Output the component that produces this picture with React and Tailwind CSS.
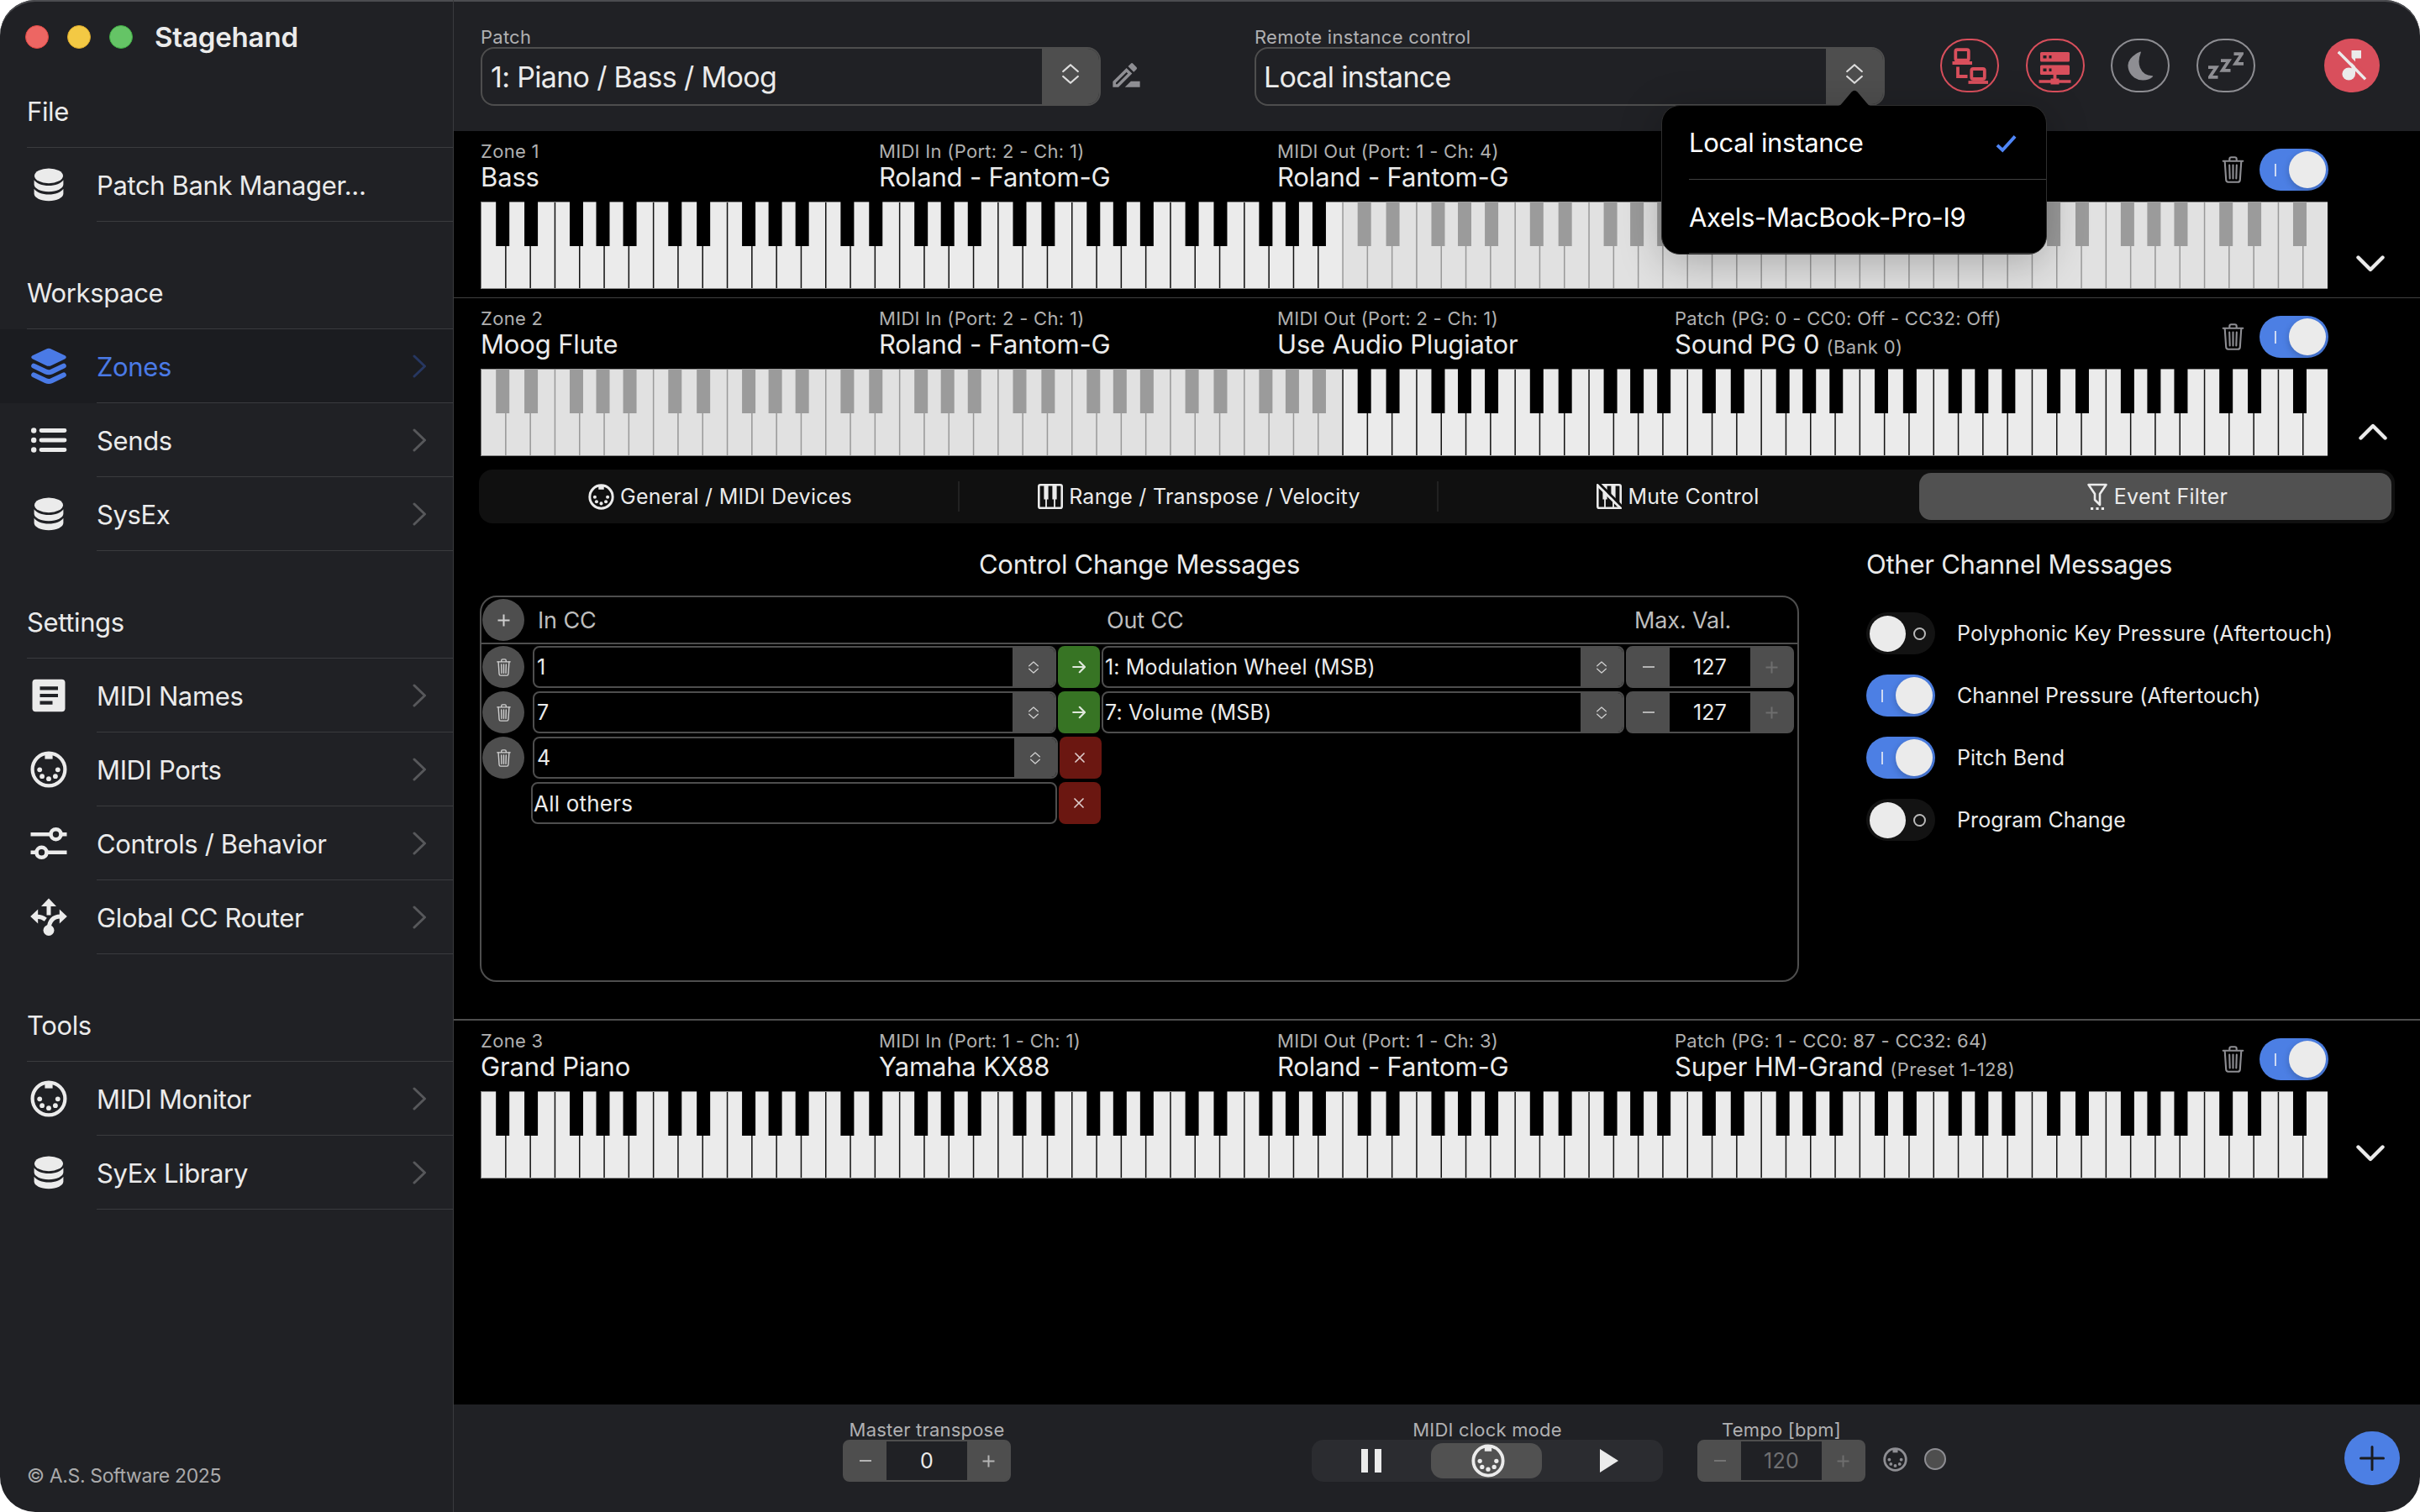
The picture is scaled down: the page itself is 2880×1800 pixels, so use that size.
import React, { useState } from "react";

const sections = [
  { title: "File", items: [{ icon: "database", label: "Patch Bank Manager...", plain: true }] },
  {
    title: "Workspace",
    items: [
      { icon: "layers", label: "Zones" },
      { icon: "list", label: "Sends" },
      { icon: "database", label: "SysEx" },
    ],
  },
  {
    title: "Settings",
    items: [
      { icon: "names", label: "MIDI Names" },
      { icon: "midi", label: "MIDI Ports" },
      { icon: "sliders", label: "Controls / Behavior" },
      { icon: "router", label: "Global CC Router" },
    ],
  },
  {
    title: "Tools",
    items: [
      { icon: "midi", label: "MIDI Monitor" },
      { icon: "database", label: "SyEx Library" },
    ],
  },
];

const zones = [
  {
    id: 1,
    name: "Bass",
    range: [0, 35],
    info: [
      { label: "MIDI In (Port: 2 - Ch: 1)", value: "Roland - Fantom-G" },
      { label: "MIDI Out (Port: 1 - Ch: 4)", value: "Roland - Fantom-G" },
    ],
  },
  {
    id: 2,
    name: "Moog Flute",
    range: [35, 75],
    info: [
      { label: "MIDI In (Port: 2 - Ch: 1)", value: "Roland - Fantom-G" },
      { label: "MIDI Out (Port: 2 - Ch: 1)", value: "Use Audio Plugiator" },
      { label: "Patch (PG: 0 - CC0: Off - CC32: Off)", value: "Sound PG 0", note: "(Bank 0)" },
    ],
  },
  {
    id: 3,
    name: "Grand Piano",
    range: [0, 75],
    info: [
      { label: "MIDI In (Port: 1 - Ch: 1)", value: "Yamaha KX88" },
      { label: "MIDI Out (Port: 1 - Ch: 3)", value: "Roland - Fantom-G" },
      { label: "Patch (PG: 1 - CC0: 87 - CC32: 64)", value: "Super HM-Grand", note: "(Preset 1-128)" },
    ],
  },
];

function MidiIcon({ className }) {
  return (
    <svg className={className} viewBox="0 0 44 44" fill="currentColor">
      <circle cx="22" cy="22" r="19.4" fill="none" stroke="currentColor" strokeWidth="4.2" />
      <rect x="17.4" y="3" width="9.2" height="6.6" />
      <circle cx="11.2" cy="22.3" r="2.9" />
      <circle cx="14.1" cy="30.2" r="2.9" />
      <circle cx="22" cy="33.2" r="2.9" />
      <circle cx="29.9" cy="30.2" r="2.9" />
      <circle cx="32.8" cy="22.3" r="2.9" />
    </svg>
  );
}

function DatabaseIcon() {
  return (
    <svg className="h-11 w-11" viewBox="0 0 44 44" fill="currentColor">
      <ellipse cx="22" cy="11.3" rx="17" ry="8.9" />
      <path d="M4.6 16.2C7.4 20.4 14 23 22 23s14.6-2.6 17.4-6.8v5.3C39.4 26.3 31.6 30.2 22 30.2S4.6 26.3 4.6 21.5z" />
      <path d="M4.6 26.7C7.4 30.9 14 33.5 22 33.5s14.6-2.6 17.4-6.8v5.8C39.4 37.3 31.6 41.2 22 41.2S4.6 37.3 4.6 32.5z" />
    </svg>
  );
}

function LayersIcon() {
  return (
    <svg className="h-11 w-11" viewBox="0 0 44 44" fill="currentColor">
      <path d="M18.6 1.7Q22 0 25.4 1.7L41.4 9.300Q44.200 11.300 41.400 13.300L25.400 20.900Q22 22.600 18.600 20.900L2.600 13.300Q-.2 11.300 2.600 9.300z" />
      <path d="M4.200 21.600L18.600 28.500Q22 30.100 25.400 28.500L39.800 21.600" fill="none" stroke="currentColor" strokeWidth="6" strokeLinecap="round" />
      <path d="M4.200 32.400L18.600 39.300Q22 40.900 25.400 39.300L39.800 32.400" fill="none" stroke="currentColor" strokeWidth="6" strokeLinecap="round" />
    </svg>
  );
}

function ListIcon() {
  return (
    <svg className="h-11 w-11" viewBox="0 0 44 44" fill="currentColor">
      <circle cx="4.2" cy="10.5" r="3.2" />
      <circle cx="4.2" cy="22" r="3.2" />
      <circle cx="4.2" cy="33.5" r="3.2" />
      <path d="M13 10.5H41M13 22H41M13 33.5H41" stroke="currentColor" strokeWidth="4.8" strokeLinecap="round" />
    </svg>
  );
}

function NamesIcon() {
  return (
    <svg className="h-11 w-11" viewBox="0 0 44 44" fill="currentColor">
      <rect x="2.5" y="2.7" width="39" height="38.6" rx="4" />
      <path d="M11.5 13.3H33M11.5 22H33M11.5 30.7H26.5" stroke="#202125" strokeWidth="4.2" />
    </svg>
  );
}

function SlidersIcon() {
  return (
    <svg className="h-11 w-11" viewBox="0 0 44 44" fill="none" stroke="currentColor" strokeWidth="4.6">
      <path d="M.5 11.2H24M36 11.2H43.5M.5 32.8H8M20 32.8H43.5" />
      <circle cx="30.5" cy="11.2" r="6" />
      <circle cx="13.5" cy="32.8" r="6" />
    </svg>
  );
}

function RouterIcon() {
  return (
    <svg className="h-[46px] w-[46px]" viewBox="0 0 46 46" fill="currentColor">
      <circle cx="23" cy="38.5" r="6.5" />
      <path d="M23 .5L32 10H14z" />
      <path d="M1.2 22L10.2 13.5V30.5z" />
      <path d="M44.8 22L35.8 13.5V30.5z" />
      <path d="M23 9V20.5" stroke="currentColor" strokeWidth="5" />
      <path d="M9 22.3Q15 22.5 19.3 25.8" fill="none" stroke="currentColor" strokeWidth="5" />
      <path d="M23 37Q24 22.3 37 22.1" fill="none" stroke="currentColor" strokeWidth="5" />
    </svg>
  );
}

function NavIcon({ name }) {
  if (name === "database") return <DatabaseIcon />;
  if (name === "layers") return <LayersIcon />;
  if (name === "list") return <ListIcon />;
  if (name === "names") return <NamesIcon />;
  if (name === "sliders") return <SlidersIcon />;
  if (name === "router") return <RouterIcon />;
  return <MidiIcon className="h-11 w-11" />;
}

function TrashIcon({ className }) {
  return (
    <svg className={className} viewBox="0 0 26 32" fill="none" stroke="currentColor" strokeWidth="2.1" strokeLinecap="round" strokeLinejoin="round">
      <path d="M1.2 5.8H24.8M8.8 5.5V3.4Q8.8 1.3 10.9 1.3H15.1Q17.2 1.3 17.2 3.4V5.5" />
      <path d="M3.2 6L4.7 28.3Q4.9 30.7 7.3 30.7H18.7Q21.1 30.7 21.3 28.3L22.8 6" />
      <path d="M8.7 10.5L9.2 26.5M13 10.5V26.5M17.3 10.5L16.8 26.5" />
    </svg>
  );
}

function PianoIcon({ muted }) {
  return (
    <svg className="h-[30px] w-[30px]" viewBox="0 0 30 30" fill="none" stroke="currentColor">
      <rect x="1.3" y="1.3" width="27.4" height="27.4" rx="1.8" strokeWidth="2.6" />
      <path d="M10 2V18.5M20 2V18.5" strokeWidth="5.2" />
      <path d="M10 17V28M20 17V28" strokeWidth="1.8" />
      {muted && <path d="M2.5 -1L31 27.5" stroke="#101010" strokeWidth="3" />}
      {muted && <path d="M0 .5L29.5 30" strokeWidth="2.8" />}
    </svg>
  );
}

function FunnelIcon() {
  return (
    <svg className="h-8 w-[26px]" viewBox="0 0 26 32" fill="none" stroke="currentColor" strokeWidth="2.6" strokeLinejoin="round">
      <path d="M2.500 2H23.500L16 13V26L10 20V13z" />
      <path d="M5 30.5H8.2M11.4 30.5H14.6M17.8 30.5H21" strokeWidth="2.8" />
    </svg>
  );
}

function UpDown({ className }) {
  return (
    <svg className={className} viewBox="0 0 20 24" fill="none" stroke="currentColor" strokeWidth="2.2" strokeLinecap="round" strokeLinejoin="round">
      <path d="M1.2 9L10 1.2L18.8 9M1.2 15L10 22.8L18.8 15" />
    </svg>
  );
}

function Toggle({ on }) {
  return (
    <div className={on ? "flex h-[50px] w-[82px] items-center rounded-full bg-[#4c7fe4]" : "flex h-[50px] w-[82px] items-center rounded-full bg-[#131313]"}>
      {on ? (
        <>
          <span className="ml-[18px] h-[15px] w-0.5 bg-[#ced9f2]" />
          <span className="ml-[15px] h-11 w-11 rounded-full bg-[#ebebeb] shadow-[0_3px_8px_rgba(0,0,0,0.2)]" />
        </>
      ) : (
        <>
          <span className="ml-1 h-[43px] w-[43px] rounded-full bg-[#ebebeb]" />
          <span className="ml-[9px] h-[15px] w-[15px] rounded-full border-2 border-[#b9b9b9]" />
        </>
      )}
    </div>
  );
}

// 75 white keys: the complete MIDI note range C-1 to G9
const KEY = 29.3;
const BLACK = [0.894, 2.05, 3.89, 4.966, 6.06];

function Keyboard({ range }) {
  const inside = (i) => i >= range[0] && i < range[1];
  const whites = [...Array(75).keys()];
  const blacks = [];
  for (let o = 0; o < 11; o++) {
    BLACK.forEach((b) => {
      if (o * 7 + b < 74.5) blacks.push(o * 7 + b);
    });
  }
  return (
    <svg className="h-[104px] w-[2198px]" viewBox="0 0 2198 104">
      {whites.map((i) => (
        <rect key={i} x={i * KEY + 0.5} y="0.5" width={KEY} height="103" fill={inside(i) ? "#ebebeb" : "#e1e1e1"} />
      ))}
      {whites.slice(1).map((i) => (
        <rect key={i} x={i * KEY - 0.2} y="0" width="1.5" height="104" fill={inside(i) ? "#111111" : "#999999"} />
      ))}
      <path d="M0 .5H2198M0 103.5H2198" stroke="#8a8a8a" />
      {blacks.map((b) => (
        <rect key={b} x={b * KEY - 8} y="0" width="16" height="53" fill={inside(Math.floor(b)) ? "#000000" : "#9b9b9b"} />
      ))}
    </svg>
  );
}

function ZoneRow({ zone, open, onToggle }) {
  return (
    <div className="flex h-[188px] pl-8">
      <div className="w-[2199px]">
        <div className="flex h-[84px] items-start">
          <div className="grid w-[2072px] grid-cols-[474px_474px_473px_651px] whitespace-nowrap pt-[9px]">
            {[{ label: "Zone " + zone.id, value: zone.name }, ...zone.info].map((col, i) => (
              <div key={i}>
                <div className="text-[22px] leading-[31px] tracking-[0.014em] text-[#b0b0b0]">{col.label}</div>
                <div className="text-[31px] leading-[30px] tracking-[-0.005em] text-[#ebebeb]">
                  {col.value}
                  {col.note && <span className="ml-2 text-[22px] tracking-[0.017em] text-[#b0b0b0]">{col.note}</span>}
                </div>
              </div>
            ))}
          </div>
          <button className="mt-[30px] text-[#8e8e93]">
            <TrashIcon className="h-8 w-[27px]" />
          </button>
          <div className="mt-[21px] ml-[18px]">
            <Toggle on />
          </div>
        </div>
        <Keyboard range={zone.range} />
      </div>
      <button onClick={onToggle} className={open ? "mt-[149px] ml-9 h-5 text-[#ebebeb]" : "mt-[148px] ml-[33px] h-5 text-[#ebebeb]"}>
        <svg className={open ? "h-5 w-[34px] rotate-180" : "h-5 w-[34px]"} viewBox="0 0 34 20" fill="none" stroke="currentColor" strokeWidth="4.4" strokeLinecap="round" strokeLinejoin="round">
          <path d="M2.5 2.5L17 17L31.5 2.5" />
        </svg>
      </button>
    </div>
  );
}

const tabs = [
  { icon: <MidiIcon className="h-[31px] w-[31px]" />, label: "General / MIDI Devices" },
  { icon: <PianoIcon />, label: "Range / Transpose / Velocity" },
  { icon: <PianoIcon muted />, label: "Mute Control" },
  { icon: <FunnelIcon />, label: "Event Filter" },
];

function Tabs() {
  const [active, setActive] = useState(3);
  return (
    <div className="mt-4 ml-[30px] flex h-16 w-[2280px] items-center rounded-2xl bg-[#101010] text-[25px] tracking-[0.01em] text-[#ebebeb]">
      {tabs.map((tab, i) => (
        <div key={i} className="flex h-full w-[570px] items-center">
          <button
            onClick={() => setActive(i)}
            className={
              active === i
                ? "mx-1 flex h-14 flex-1 items-center justify-center gap-[7px] rounded-[14px] bg-[#515151] pl-1"
                : "flex h-14 flex-1 items-center justify-center gap-[7px] pl-1"
            }
          >
            {tab.icon}
            <span className="pt-[2px]">{tab.label}</span>
          </button>
          {i + 1 < active && <span className="-mr-0.5 h-9 w-0.5 bg-[#222222]" />}
        </div>
      ))}
    </div>
  );
}

function CCSelect({ value, className }) {
  return (
    <div className={className}>
      <span className="flex-1 pl-[3px]">{value}</span>
      <span className="flex w-[50px] items-center justify-center bg-[#4e4e4e] text-[#cfcfcf]">
        <UpDown className="h-[15px] w-[12px]" />
      </span>
    </div>
  );
}

function RoundButton({ children }) {
  return <button className="flex h-[50px] w-[50px] items-center justify-center rounded-full bg-[#4e4e4e] text-[#cfcfcf]">{children}</button>;
}

function Pass() {
  return (
    <button className="flex h-[50px] w-[50px] items-center justify-center rounded-lg bg-[#377424] text-[#dfe8dc]">
      <svg className="h-4 w-4" viewBox="0 0 16 16" fill="none" stroke="currentColor" strokeWidth="2.2" strokeLinecap="round" strokeLinejoin="round">
        <path d="M1.2 8H14.5M8.8 1.8L15 8L8.8 14.2" />
      </svg>
    </button>
  );
}

function Block() {
  return (
    <button className="flex h-[50px] w-[50px] items-center justify-center rounded-lg bg-[#6b1711] pr-0.5 text-[#dccac9]">
      <svg className="h-3 w-3" viewBox="0 0 12 12" fill="none" stroke="currentColor" strokeWidth="1.7" strokeLinecap="round">
        <path d="M1 1L11 11M11 1L1 11" />
      </svg>
    </button>
  );
}

function Stepper({ value, dim, maxed, field }) {
  return (
    <div className="flex h-[50px] w-[200px] overflow-hidden rounded-lg border-2 border-[#4e4e4e] bg-[#4e4e4e] text-[25px] text-[#ebebeb]">
      <button className={dim ? "flex w-[50px] items-center justify-center text-[#747474]" : "flex w-[50px] items-center justify-center text-[#b4b4b4]"}>
        <span className="h-[2.5px] w-[14px] bg-current" />
      </button>
      <span className={field === "dark" ? "flex flex-1 items-center justify-center bg-[#202125]" : "flex flex-1 items-center justify-center bg-black"}>
        <span className={dim ? "pt-px text-[#6f6f71]" : "pt-px"}>{value}</span>
      </span>
      <button className={dim || maxed ? "flex w-[50px] items-center justify-center text-[#6e6e6e]" : "flex w-[50px] items-center justify-center text-[#b4b4b4]"}>
        <svg className="h-[15px] w-[15px]" viewBox="0 0 15 15" stroke="currentColor" strokeWidth="2">
          <path d="M.5 7.5H14.5M7.5 .5V14.5" />
        </svg>
      </button>
    </div>
  );
}

const ccRows = [
  { input: "1", output: "1: Modulation Wheel (MSB)", max: 127 },
  { input: "7", output: "7: Volume (MSB)", max: 127 },
];

function EventFilter() {
  return (
    <div className="flex pl-[31px]">
      <div className="w-[1570px]">
        <h2 className="flex h-[86px] items-center justify-center pt-3 text-[31px] tracking-[-0.008em] text-[#ebebeb]">Control Change Messages</h2>
        <div className="h-[460px] rounded-[20px] border-2 border-[#4e4e4e]">
          <div className="flex h-14 items-start border-b-2 border-[#4e4e4e] pt-0.5 pl-px text-[27px] tracking-[-0.005em] text-[#bdbdbd]">
            <RoundButton>
              <svg className="h-[15px] w-[15px]" viewBox="0 0 15 15" stroke="currentColor" strokeWidth="2">
                <path d="M.5 7.5H14.5M7.5 .5V14.5" />
              </svg>
            </RoundButton>
            <span className="ml-4 w-[677px] leading-[51px]">In CC</span>
            <span className="w-[628px] leading-[51px]">Out CC</span>
            <span className="leading-[51px]">Max. Val.</span>
          </div>
          <div className="flex flex-col gap-1 pt-0.5 pl-px text-[25px] tracking-[0.006em] text-[#ebebeb]">
            {ccRows.map((row) => (
              <div key={row.input} className="flex gap-0.5">
                <RoundButton>
                  <TrashIcon className="h-[21px] w-[17px]" />
                </RoundButton>
                <CCSelect value={row.input} className="ml-2 flex h-[50px] w-[623px] overflow-hidden rounded-lg border-2 border-[#4e4e4e] leading-[47px]" />
                <Pass />
                <CCSelect value={row.output} className="flex h-[50px] w-[622px] overflow-hidden rounded-lg border-2 border-[#4e4e4e] leading-[47px] [&>span:first-child]:pl-0.5" />
                <Stepper value={row.max} maxed />
              </div>
            ))}
            <div className="flex gap-0.5">
              <RoundButton>
                <TrashIcon className="h-[21px] w-[17px]" />
              </RoundButton>
              <CCSelect value="4" className="ml-2 flex h-[50px] w-[625px] overflow-hidden rounded-lg border-2 border-[#4e4e4e] leading-[47px]" />
              <Block />
            </div>
            <div className="flex gap-0.5">
              <div className="ml-[58px] h-[50px] w-[626px] rounded-lg border-2 border-[#4e4e4e] pl-px text-[26px] leading-[48px] tracking-[0.008em]">All others</div>
              <Block />
            </div>
          </div>
        </div>
      </div>
      <div className="ml-20">
        <h2 className="flex h-[86px] items-center pt-3 text-[31px] tracking-[-0.008em] text-[#ebebeb]">Other Channel Messages</h2>
        <div className="flex flex-col gap-6 pt-5 text-[25px] tracking-[0.004em] text-[#ebebeb]">
          <div className="flex items-center gap-[26px]">
            <Toggle />
            <span className="pt-0.5">Polyphonic Key Pressure (Aftertouch)</span>
          </div>
          <div className="flex items-center gap-[26px]">
            <Toggle on />
            <span className="pt-0.5">Channel Pressure (Aftertouch)</span>
          </div>
          <div className="flex items-center gap-[26px]">
            <Toggle on />
            <span className="pt-0.5">Pitch Bend</span>
          </div>
          <div className="flex items-center gap-[26px]">
            <Toggle />
            <span className="pt-0.5">Program Change</span>
          </div>
        </div>
      </div>
    </div>
  );
}

function Sidebar() {
  return (
    <aside className="flex w-[540px] flex-col border-r border-[#3a3b3e] text-[31px] tracking-[-0.012em] text-[#ebebeb]">
      <div className="flex h-[88px] items-center pl-[30px]">
        <span className="h-7 w-7 rounded-full border border-[#e04844] bg-[#ed6663]" />
        <span className="ml-[22px] h-7 w-7 rounded-full border border-[#dba92c] bg-[#f3c944]" />
        <span className="ml-[22px] h-7 w-7 rounded-full border border-[#3fae44] bg-[#65c466]" />
        <span className="ml-[26px] pt-px text-[33px] font-semibold tracking-[-0.005em]">Stagehand</span>
      </div>
      {sections.map((section, i) => (
        <div key={section.title}>
          <div className={i === 0 ? "pl-8" : "pt-10 pl-8"}>
            <div className="h-[88px] border-b border-[#3a3b3e] leading-[89px]">{section.title}</div>
          </div>
          {section.items.map((item) => (
            <div
              key={item.label}
              className={item.label === "Zones" ? "flex h-[88px] items-center bg-[#1b1c20] text-[#4a7ae6]" : "flex h-[88px] items-center"}
            >
              <span className="flex w-[115px] justify-center">
                <NavIcon name={item.icon} />
              </span>
              <div className="flex h-[88px] flex-1 items-center justify-between border-b border-[#3a3b3e] pr-[31px]">
                <span className="pt-0.5 leading-[87px]">{item.label}</span>
                {!item.plain && (
                  <svg
                    className={item.label === "Zones" ? "h-7 w-[17px] text-[#273761]" : "h-7 w-[17px] text-[#57585b]"}
                    viewBox="0 0 17 28"
                    fill="none"
                    stroke="currentColor"
                    strokeWidth="3"
                    strokeLinecap="round"
                    strokeLinejoin="round"
                  >
                    <path d="M2 2L14.5 14L2 26" />
                  </svg>
                )}
              </div>
            </div>
          ))}
        </div>
      ))}
      <div className="mt-auto pb-[27px] pl-8 text-[23px] leading-8 tracking-[-0.016em] text-[#aaaaab]">© A.S. Software 2025</div>
    </aside>
  );
}

function Header() {
  return (
    <header className="flex h-[156px] pl-8">
      <div className="w-[738px] pt-[34px]">
        <div className="text-[22px] leading-[21px] tracking-[0.011em] text-[#b0b0b2]">Patch</div>
        <div className="mt-px flex h-[70px] overflow-hidden rounded-2xl border-2 border-[#4e4e4e] text-[34px] leading-[67px] tracking-[-0.02em] text-[#ebebeb]">
          <span className="flex-1 pl-[10px]">1: Piano / Bass / Moog</span>
          <span className="flex w-[68px] items-center justify-center bg-[#4e4e4e] text-[#dddddd]">
            <UpDown className="h-6 w-5 -translate-y-[3px]" />
          </span>
        </div>
      </div>
      <svg className="mt-[68px] ml-[9px] h-[43px] w-[43px] text-[#8e8e93]" viewBox="0 0 24 24" fill="currentColor">
        <path d="M15 16l-4 4h10v-4zM12.06 7.19L3 16.25V20h3.75l9.06-9.06-3.75-3.75zM5.92 18H5v-.92l7.06-7.06.92.92L5.92 18zM18.71 8.04a.996.996 0 0 0 0-1.41l-2.34-2.34a1.001 1.001 0 0 0-1.41 0l-1.83 1.83 3.75 3.75 1.83-1.83z" />
      </svg>
      <div className="relative ml-[131px] w-[750px] pt-[34px]">
        <div className="text-[22px] leading-[21px] tracking-[0.011em] text-[#b0b0b2]">Remote instance control</div>
        <div className="mt-px flex h-[70px] overflow-hidden rounded-2xl border-2 border-[#4e4e4e] text-[34px] leading-[67px] tracking-[-0.02em] text-[#ebebeb]">
          <span className="flex-1 pl-[9px]">Local instance</span>
          <span className="flex w-[68px] items-center justify-center bg-[#4e4e4e] text-[#dddddd]">
            <UpDown className="h-6 w-5 -translate-y-[3px]" />
          </span>
        </div>
        {/* dropdown menu with its arrow */}
        <svg className="absolute top-[107px] left-[694px] z-20 h-[19px] w-10" viewBox="0 0 40 19" fill="#000000">
          <path d="M1 19Q4 18 6 15L16.500 2.500Q20 -1 23.500 2.500L34 15Q36 18 39 19z" />
        </svg>
        <div className="absolute top-[125px] left-[484px] z-10 h-[178px] w-[459px] overflow-hidden rounded-[22px] border border-[#2e2e2e] bg-black pl-8 text-[31px] leading-[90px] tracking-[-0.01em] text-white shadow-[0_10px_50px_rgba(0,0,0,0.25)]">
          <div className="flex h-[88px] items-center justify-between border-b border-[#3f3f3f] pr-[35px]">
            <span className="pt-px">Local instance</span>
            <svg className="mt-0.5 h-[22px] w-[25px]" viewBox="0 0 26 22" fill="none" stroke="#4f86f7" strokeWidth="4">
              <path d="M2 13L8.5 19L24 2" />
            </svg>
          </div>
          <div className="h-[88px] border-b border-[#3f3f3f]">Axels-MacBook-Pro-I9</div>
        </div>
      </div>
      <div className="mt-[46px] ml-[66px] flex h-16 gap-[31.6px]">
        <button className="flex w-[70px] items-center justify-center rounded-full border-2 border-[#d94f5c] text-[#d94f5c]">
          <svg className="h-[43px] w-[43px]" viewBox="0 0 43 43" fill="none" stroke="currentColor" strokeWidth="3.8">
            <rect x="4.3" y="2.2" width="15.5" height="12.5" rx="2" />
            <path d="M.5 18H24M7 22.5V34H18.5" />
            <rect x="23.3" y="25" width="15.5" height="12" rx="2" />
            <path d="M19.5 41H43" />
          </svg>
        </button>
        <button className="flex w-[70px] items-center justify-center rounded-full border-2 border-[#d94f5c] text-[#d94f5c]">
          <svg className="mt-[6px] h-[39px] w-[39px]" viewBox="0 0 39 39" fill="currentColor">
            <rect x="2" y="0" width="35" height="11.5" rx="1.5" />
            <rect x="2" y="15.5" width="35" height="11.5" rx="1.5" />
            <path d="M5.5 4H9.5V7.5H5.5zM12.5 4H15.5V7.5H12.5zM5.5 19.5H9.5V23H5.5zM12.5 19.5H15.5V23H12.5z" fill="#202125" />
            <path d="M17.6 27H21.4V31.5H17.6zM14.5 31.5H24.5V38.5H14.5zM.5 33.3H38.5V36.7H.5z" />
          </svg>
        </button>
        <button className="flex w-[70px] items-center justify-center rounded-full border-2 border-[#8e8e93] text-[#8e8e93]">
          <svg className="h-[35px] w-[31px]" viewBox="0 0 31 35" fill="currentColor">
            <path d="M15.2 .6Q16 .2 15.8 1.4Q11.8 11.5 14.8 19.5Q18.8 29 29.5 29.2Q30.6 29.3 30 30.2Q25.5 34.6 18.3 34.6Q9.8 34.3 4.8 28.6Q.6 23.6 .4 17Q.8 6.5 15.2 .6z" />
          </svg>
        </button>
        <button className="flex w-[70px] items-center justify-center rounded-full border-2 border-[#8e8e93] text-[#8e8e93]">
          <svg className="h-[32px] w-[42px]" viewBox="0 0 42 32" fill="none" stroke="currentColor" strokeWidth="3.8" strokeLinejoin="miter">
            <path d="M0 18.2H9.5L1.8 29.8H11.5M15 10.2H24.5L16.8 21.8H26.5M30.5 2.2H40L32.3 13.8H42" />
          </svg>
        </button>
      </div>
      <button className="mt-[46px] ml-[82px] flex h-16 w-[66px] items-center justify-center rounded-full bg-[#d94f5c]">
        <svg className="h-9 w-[34px]" viewBox="0 0 34 36" fill="#ebebeb">
          <path d="M16.5 0H28V9.5H21V28H16.5z" />
          <ellipse cx="13.2" cy="28" rx="7.8" ry="7.6" />
          <path d="M3.5 -1.5L37 32.5" stroke="#d94f5c" strokeWidth="4" />
          <path d="M.8 1.6L33 34.4" stroke="#ebebeb" strokeWidth="3.4" />
        </svg>
      </button>
    </header>
  );
}

function Footer() {
  return (
    <footer className="flex h-32 pt-[19px] text-[22px] tracking-[0.009em] text-[#b0b0b2]">
      <div className="ml-[463px] flex w-[200px] flex-col items-center">
        <span className="h-[23px] leading-[23px]">Master transpose</span>
        <Stepper value="0" field="dark" />
      </div>
      <div className="ml-[358px] flex w-[418px] flex-col items-center">
        <span className="h-[23px] leading-[23px]">MIDI clock mode</span>
        <div className="flex h-[50px] w-[418px] items-center rounded-[14px] bg-[#2b2c30] text-[#ebebeb]">
          <button className="flex w-[142px] items-center justify-center gap-2">
            <span className="h-7 w-2 bg-current" />
            <span className="h-7 w-2 bg-current" />
          </button>
          <button className="flex h-[42px] w-[132px] items-center justify-center rounded-[14px] bg-[#515151] pl-1">
            <MidiIcon className="h-10 w-10" />
          </button>
          <button className="flex w-[144px] items-center justify-center pl-4">
            <svg className="h-7 w-[22px]" viewBox="0 0 22 28" fill="currentColor">
              <path d="M0 0L22 14L0 28z" />
            </svg>
          </button>
        </div>
      </div>
      <div className="ml-[41px] flex w-[200px] flex-col items-center">
        <span className="h-[23px] leading-[23px]">Tempo [bpm]</span>
        <Stepper value="120" field="dark" dim />
      </div>
      <div className="mt-[31px] ml-[21px] flex h-[30px] items-center gap-5 text-[#8e8e93]">
        <MidiIcon className="h-[29px] w-[29px]" />
        <span className="h-[26px] w-[26px] rounded-full border-2 border-[#8e8e93] bg-[#4e4e4e]" />
      </div>
      <button className="mt-[13px] mr-6 ml-auto flex h-16 w-[66px] items-center justify-center rounded-full bg-[#4c7fe4]">
        <svg className="h-[30px] w-[30px]" viewBox="0 0 30 30" stroke="#1a1b1e" strokeWidth="3" strokeLinecap="round">
          <path d="M1.5 15H28.5M15 1.5V28.5" />
        </svg>
      </button>
    </footer>
  );
}

export default function App() {
  const [openZone, setOpenZone] = useState(2);
  const toggle = (id) => setOpenZone(openZone === id ? null : id);
  return (
    <div className="h-[1800px] w-[2880px] bg-white">
      <div className="flex h-full w-full overflow-hidden rounded-[42px] bg-[#202125] font-['Inter',sans-serif] shadow-[inset_0_2px_0_#4b4c50]">
        <Sidebar />
        <main className="flex flex-1 flex-col">
          <Header />
          <div className="flex-1 bg-black">
            {zones.map((zone) => (
              <div
                key={zone.id}
                className={
                  zone.id === openZone
                    ? "h-[860px] border-b-2 border-[#4e4e4e]"
                    : zone.id === 3
                      ? "h-[199px]"
                      : "h-[199px] border-b border-[#404040]"
                }
              >
                <ZoneRow zone={zone} open={zone.id === openZone} onToggle={() => toggle(zone.id)} />
                {zone.id === openZone && (
                  <>
                    <Tabs />
                    <EventFilter />
                  </>
                )}
              </div>
            ))}
          </div>
          <Footer />
        </main>
      </div>
    </div>
  );
}
